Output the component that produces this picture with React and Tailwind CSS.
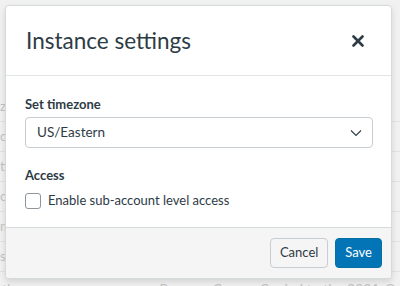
import { useState } from "react";

const rows = ["za", "c", "ti", "or", "m", "s"];

export default function App() {
  const [access, setAccess] = useState(false);

  return (
    <div
      className="relative w-[400px] h-[286px] overflow-hidden bg-[#f1f1f1]"
      style={{ fontFamily: "Lato, 'Noto Sans', sans-serif" }}
    >
      {/* dimmed page behind the modal */}
      <div className="pt-[92px] text-[#c4c4c4] text-[13px]">
        {rows.map((r, i) => (
          <div key={i} className="h-[30px] border-b border-[#e2e2e2] flex items-center">
            <span>{r}</span>
          </div>
        ))}
        <div className="flex justify-between pl-[2px] pr-[4px] pt-[6px] text-[14px]">
          <span>the</span>
          <span>Remove Course Copied to the 2021-O</span>
        </div>
      </div>

      {/* modal */}
      <div className="absolute left-[5px] top-[5px] w-[387px] h-[274px] bg-white border border-[#d5dadd] rounded-[4px] shadow-[0_3px_6px_rgba(0,0,0,0.12)] flex flex-col overflow-hidden text-[#2d3b45]">
        <div className="h-[70px] flex items-center justify-between pl-[20px] pr-[27px] border-b border-[#e0e4e6]">
          <h2 className="text-[22.5px] leading-none pt-[1px]">Instance settings</h2>
          <button aria-label="Close" className="text-[#2d3b45]">
            <svg className="w-[12px] h-[12px]" viewBox="0 0 12 12" fill="none" stroke="currentColor" strokeWidth="2.6" strokeLinecap="round">
              <path d="M1.5 1.5l9 9M10.5 1.5l-9 9" />
            </svg>
          </button>
        </div>

        <div className="flex-1 px-[19px] pt-[22px]">
          <p className="text-[13px] font-bold leading-none">Set timezone</p>
          <div className="mt-[6px] h-[31px] w-[348px] border border-[#c7cdd1] rounded-[4px] flex items-center justify-between pl-[11px] pr-[10px]">
            <span className="text-[13.5px]">US/Eastern</span>
            <svg className="w-[12px] h-[12px]" viewBox="0 0 12 12" fill="none" stroke="#2d3b45" strokeWidth="1.1">
              <path d="M1 3.5l5 5 5-5" />
            </svg>
          </div>
          <p className="mt-[21px] text-[13px] font-bold leading-none">Access</p>
          <label className="mt-[9px] flex items-center gap-[7px] text-[13px]">
            <input
              type="checkbox"
              checked={access}
              onChange={(e) => setAccess(e.target.checked)}
              className="appearance-none w-[16px] h-[16px] border border-[#8b969e] rounded-[3px] bg-white"
            />
            Enable sub-account level access
          </label>
        </div>

        <div className="h-[51px] bg-[#f5f5f5] border-t border-[#d5dadd] flex items-center justify-end gap-[7px] pr-[9px]">
          <button className="h-[30px] px-[9px] border border-[#c7cdd1] rounded-[4px] bg-[#f5f5f5] text-[13px] text-[#2d3b45]">
            Cancel
          </button>
          <button className="h-[30px] px-[9px] border border-[#0770a3] rounded-[4px] bg-[#0374b5] text-[13px] text-white">
            Save
          </button>
        </div>
      </div>
    </div>
  );
}
